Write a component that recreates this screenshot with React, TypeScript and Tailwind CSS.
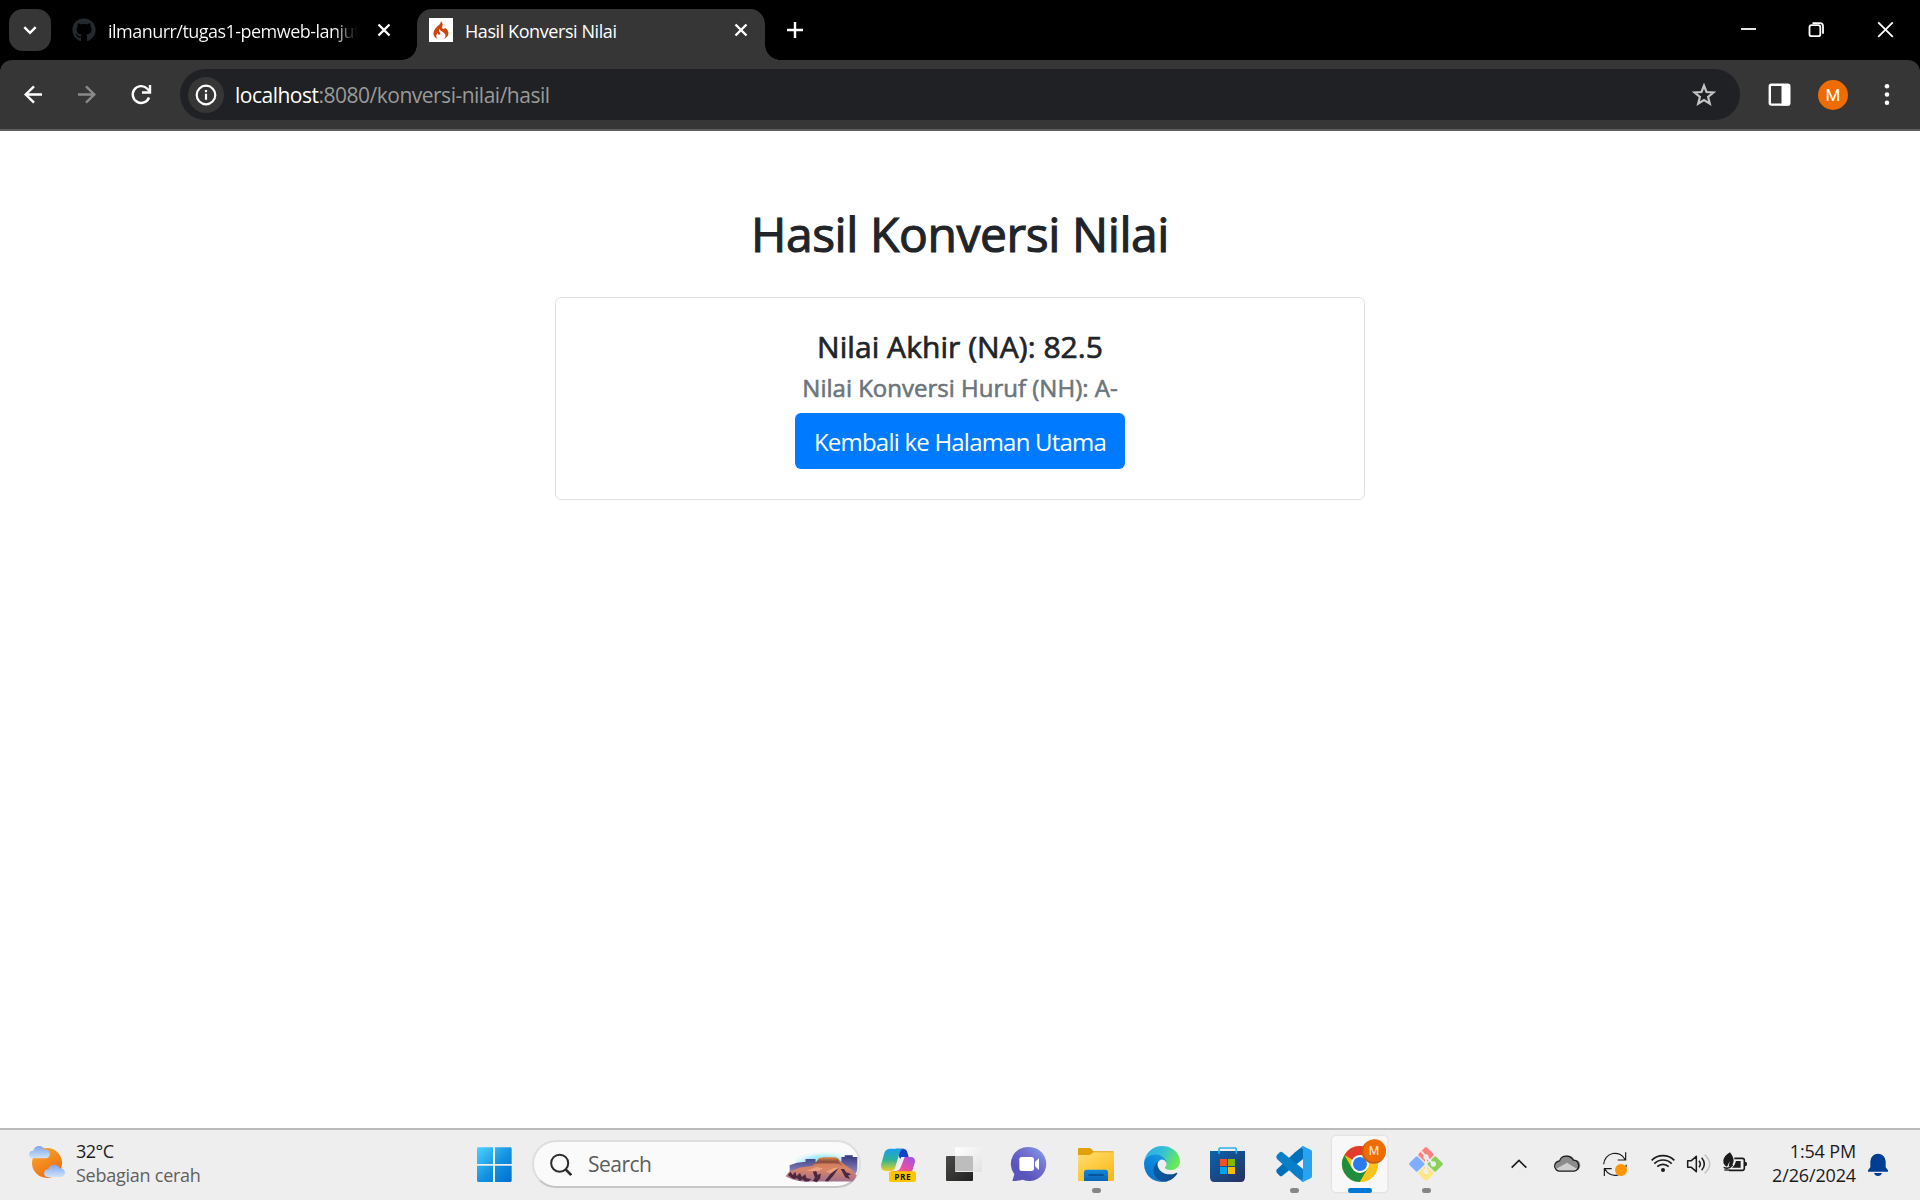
import type { ReactNode } from "react";
import { FaGithub } from "react-icons/fa";
import { SiCodeigniter } from "react-icons/si";

function TabStrip() {
  return (
    <div className="flex h-[60px] shrink-0 bg-black text-white">
      <button className="mt-[9px] ml-[9px] flex size-[42px] items-center justify-center rounded-[14px] bg-[#363636]">
        <svg viewBox="0 0 42 42" className="size-[42px]" fill="none" stroke="#fff" strokeWidth="2.4">
          <path d="M15.3 18.2 21 23.8l5.7-5.6" />
        </svg>
      </button>
      <div className="flex w-[366px] items-start pt-[18px] pl-[21px]">
        <FaGithub className="size-6 shrink-0 text-[#24292e]" />
        <div className="ml-3 h-6 w-[252px] overflow-hidden whitespace-nowrap bg-linear-to-r from-white from-90% to-black to-100% bg-clip-text text-[18px]/[27px] tracking-[-0.53px] text-transparent">
          ilmanurr/tugas1-pemweb-lanjut
        </div>
        <Cross className="ml-[12px]" />
      </div>
      <div className="relative flex h-[51px] w-[348px] self-end rounded-t-[15px] bg-[#363636] pt-[9px] pl-3">
        <div className="absolute bottom-0 -left-[15px] size-[15px] bg-[radial-gradient(circle_at_0_0,#000_14.5px,#363636_15px)]" />
        <div className="absolute -right-[15px] bottom-0 size-[15px] bg-[radial-gradient(circle_at_100%_0,#000_14.5px,#363636_15px)]" />
        <span className="flex size-6 items-center justify-center bg-white">
          <SiCodeigniter className="size-[18px] text-[#d04408]" />
        </span>
        <span className="ml-3 w-[264px] whitespace-nowrap text-[18px]/[27px] tracking-[-0.42px]">Hasil Konversi Nilai</span>
        <Cross className="" />
      </div>
      <svg viewBox="0 0 60 60" className="size-[60px]" stroke="#fff" strokeWidth="2.4">
        <path d="M22 30h16M30 22v16" />
      </svg>
      <svg viewBox="0 0 210 60" className="ml-auto h-[60px] w-[210px]" fill="none" stroke="#fff" strokeWidth="1.8">
        <path d="M31 29h15" />
        <rect x="99.500" y="25.200" width="10.800" height="11" rx="2" />
        <path d="M102.500 23.200h7.500a3 3 0 0 1 3 3v7.500" />
        <path d="m168.200 22.400 14.600 14.400M182.800 22.400 168.200 36.800" />
      </svg>
    </div>
  );
}

function Cross({ className }: { className: string }) {
  return (
    <svg viewBox="0 0 24 24" className={`size-6 shrink-0 ${className}`} stroke="#fff" strokeWidth="2.4">
      <path d="m6.500 6.500 11 11M17.500 6.500l-11 11" />
    </svg>
  );
}

function Toolbar() {
  return (
    <div className="shrink-0 bg-black">
      <div className="flex h-[71px] rounded-t-[12px] border-b-2 border-[#5e5e5e] bg-[#363636] pt-[9px]">
        <svg viewBox="0 69 180 51" className="h-[51px] w-[180px] shrink-0" fill="none" stroke="#fff" strokeWidth="2.4">
          <path d="M42 94.500H26M34 86.300l-8.300 8.200 8.300 8.200" />
          <path d="M78 94.500h16M86 86.300l8.300 8.200-8.300 8.200" stroke="#8a8a8a" />
          <path d="M149 97.500A8.400 8.400 0 1 1 147 88.500l2.500 2.500" />
          <path d="M150 85v7.500h-8" />
        </svg>
        <div className="flex h-[51px] w-[1560px] items-center rounded-full bg-[#202124] pl-[7.5px]">
          <span className="flex size-9 items-center justify-center rounded-full bg-[#363636]">
            <svg viewBox="0 0 24 24" className="size-6" fill="none" stroke="#fff" strokeWidth="2.200">
              <circle cx="12" cy="12" r="9.300" />
              <path d="M12 10.800v6M12 7v2.200" />
            </svg>
          </span>
          <span className="ml-[11.5px] text-[21px]/[30px] tracking-[-0.5px] text-[#9a9a9a]">
            <span className="text-white">localhost</span>:8080/konversi-nilai/hasil
          </span>
          <svg viewBox="0 0 24 24" className="mr-6 ml-auto size-6" fill="none" stroke="#c4c4c4" strokeWidth="2.200">
            <path d="m12 2.600 2.500 6.400 6.900.5-5.300 4.400 1.700 6.800-5.800-3.700-5.800 3.700 1.700-6.800L2.600 9.500l6.900-.5z" />
          </svg>
        </div>
        <svg viewBox="1740 69 180 51" className="h-[51px] w-[180px] shrink-0">
          <rect x="1769.800" y="84.800" width="19.500" height="19.800" rx="1.500" fill="none" stroke="#fff" strokeWidth="2.400" />
          <path d="M1781.500 84h8v21.500h-8z" fill="#fff" />
          <circle cx="1833" cy="95" r="15" fill="#ef6c00" />
          <text x="1833" y="101" textAnchor="middle" className="font-[Roboto] text-[17px]" fill="#fff">M</text>
          <g fill="#fff"><circle cx="1887" cy="86.300" r="2.300" /><circle cx="1887" cy="94.500" r="2.300" /><circle cx="1887" cy="102.700" r="2.300" /></g>
        </svg>
      </div>
    </div>
  );
}

function Page() {
  return (
    <main className="flex grow flex-col items-center bg-white pt-[74px] text-[#212529]">
      <h1 className="text-[48px]/[58px] tracking-[-0.42px] [-webkit-text-stroke:1.1px_#212529]">Hasil Konversi Nilai</h1>
      <section className="mt-[34px] flex h-[203px] w-[810px] flex-col items-center rounded-[6px] border border-[#dfdfdf] pt-[31px]">
        <h5 className="text-[30px]/[36px] tracking-[0.05px] [-webkit-text-stroke:0.7px_#212529]">Nilai Akhir (NA): 82.5</h5>
        <h6 className="mt-[8px] text-[24px]/[29px] text-[#6c757d] [-webkit-text-stroke:0.6px_#6c757d]">Nilai Konversi Huruf (NH): A-</h6>
        <a className="mt-[11px] flex h-[56px] w-[330px] items-center justify-center rounded-[6px] bg-[#007bff] pt-[2px] text-[24px]/[36px] tracking-[-0.78px] text-white">Kembali ke Halaman Utama</a>
      </section>
    </main>
  );
}

/* One 66px wide taskbar slot; x is the slot's left edge on the icon sheet. */
function Slot({ x, children }: { x: number; children: ReactNode }) {
  return (
    <svg viewBox={`${x} 30 198 210`} className="h-[70px] w-[66px] shrink-0">
      {children}
    </svg>
  );
}

function Taskbar() {
  return (
    <footer className="flex h-[72px] shrink-0 border-t-2 border-[#bbb] bg-[#eee]">
      <div className="flex w-[462px] pl-[29px]">
        <svg viewBox="87 30 108 210" className="h-[70px] w-9">
          <defs>
            <linearGradient id="sun" x1="0" y1="0" x2=".6" y2="1"><stop stopColor="#f5b02e" /><stop offset="1" stopColor="#f26a10" /></linearGradient>
            <linearGradient id="cl" x1="0" y1="0" x2="0" y2="1"><stop stopColor="#7fa6e8" /><stop offset="1" stopColor="#cfe2fb" /></linearGradient>
          </defs>
          <circle cx="141" cy="129" r="45" fill="url(#sun)" />
          <path d="M98 115a11 11 0 0 1 2-23 18 18 0 0 1 34-3 13 13 0 0 1 5 26z" fill="url(#cl)" />
          <path d="M143 171a11 11 0 0 1 2-23 18 18 0 0 1 34-3 13 13 0 0 1 5 26z" fill="url(#cl)" />
        </svg>
        <div className="ml-[11px] flex flex-col pt-[9px] text-[18px]/[24px]">
          <span className="tracking-[-0.5px] text-[#1b1b1b]">32°C</span>
          <span className="tracking-[-0.25px] text-[#606060]">Sebagian cerah</span>
        </div>
      </div>
      <svg viewBox="6 30 198 210" className="h-[70px] w-[66px]">
        <defs><linearGradient id="win" gradientUnits="userSpaceOnUse" x1="51" y1="82" x2="155" y2="186"><stop stopColor="#4cd3ff" /><stop offset=".55" stopColor="#1290e0" /><stop offset="1" stopColor="#0070d0" /></linearGradient></defs>
        <path d="M54 82h45v50H51V85zM105 82h48l2 3v47h-50zM51 137h48v49H54l-3-3zM105 137h50v46l-2 3h-48z" fill="url(#win)" />
      </svg>
      <div className="mt-[10px] mr-[5px] ml-[4px] flex h-[48px] w-[329px] items-center rounded-full border-2 border-[#dedede] border-b-[#c6c6c6] bg-[#fafafa]">
        <svg viewBox="270 97 66 70" className="ml-4 h-[23px] w-[22px]" fill="none" stroke="#2b2b2b">
          <circle cx="299" cy="128" r="26" strokeWidth="6" />
          <path d="m317 147 17 17" strokeWidth="8" />
        </svg>
        <span className="ml-[16px] text-[21px]/[28px] tracking-[-0.5px] text-[#5c5c5c]">Search</span>
        <svg viewBox="976 80 220 114" className="mr-[1px] ml-auto h-[38px] w-[73px]">
          <defs>
            <radialGradient id="sky" cx=".5" cy=".75" r=".6"><stop stopColor="#6fdcfb" /><stop offset=".6" stopColor="#a8ebfc" /><stop offset="1" stopColor="#fafafa" stopOpacity="0" /></radialGradient>
            <linearGradient id="butte" x1="0" y1="0" x2="0" y2="1"><stop stopColor="#33387c" /><stop offset="1" stopColor="#9a90c4" /></linearGradient>
            <linearGradient id="rock" x1="0" y1="0" x2="0" y2="1"><stop stopColor="#c97a52" /><stop offset=".5" stopColor="#d98468" /><stop offset="1" stopColor="#a0708e" /></linearGradient>
            <linearGradient id="cap" x1="0" y1="0" x2="0" y2="1"><stop stopColor="#e08a48" /><stop offset=".5" stopColor="#8d4c3d" /><stop offset="1" stopColor="#b86a50" /></linearGradient>
          </defs>
          <ellipse cx="1092" cy="122" rx="88" ry="38" fill="url(#sky)" />
          <path d="M990 165v-24l22-8 26-3v-8h30v8l40 4 38-4v-14h10v-5h24v5h14v34q0 14-10 20z" fill="url(#butte)" />
          <path d="m978 174 10-14 32-12 40-6 20-22 14-2h38l20 18 26 18 14 18q-4 12-12 18h-150q-34-4-52-16z" fill="url(#rock)" />
          <path d="m1056 140 14-8 8-12 14-3h36l10 5v8l14 12q-20-8-40-6-30-2-56 4z" fill="url(#cap)" />
          <path d="m985 170 8-10 6 10 8-10 4 14 10-10 6 12 10-8 4 12 14 2-8 8h-12l-6-8-8 6-8-8-12 2zM1060 160l10-2 4 12 10-4-2 14-10 12-12-4 6-10zM1096 188l16-20 26-20-16 24-16 18zM1144 152l10 0 6 10 16 6-10 4 6 10-14-4z" fill="#4c2840" />
          <path d="m1040 158 30-12 20 4-12 8zM1100 160l24-12 14 0-26 16z" fill="#eba283" />
        </svg>
      </div>
      <AppIcons />
      <Tray />
    </footer>
  );
}

function AppIcons() {
  return (
    <>
      <Slot x={18}>
        <defs>
          <linearGradient id="cpa" x1="0" y1="0" x2="0" y2="1"><stop stopColor="#1a9df0" /><stop offset=".5" stopColor="#2bb39a" /><stop offset="1" stopColor="#f0cf20" /></linearGradient>
          <linearGradient id="cpb" x1="0" y1="1" x2="1" y2="0"><stop stopColor="#ff8a50" /><stop offset=".4" stopColor="#f0509a" /><stop offset="1" stopColor="#9a50f0" /></linearGradient>
        </defs>
        <path d="M108 86h22q8 0 11 8l5 17h-14q-8 0-11 8z" fill="#1540c8" />
        <path d="M89 86h41q-8 2-11 12l-14 46q-3 9-12 9H76q-14-2-13-18l10-36q4-12 16-13z" fill="url(#cpa)" />
        <path d="M135 111h18q12 0 12 14l-7 24q-3 8-12 9H84q10 0 14-5 6 0 10-10l12-24q4-8 15-8z" fill="url(#cpb)" />
        <path d="M124 111h10l-13 34q-4 8-12 8h-12q8-2 11-12z" fill="#f4eef2" />
        <rect x="87" y="154" width="81" height="32" rx="7" fill="#fdc500" />
        <text x="128" y="179" textAnchor="middle" className="font-['Open_Sans'] text-[25px] font-bold" letterSpacing="1.500" fill="#151515">PRE</text>
      </Slot>
      <Slot x={216}>
        <defs><linearGradient id="tv" x1="0" y1="0" x2="1" y2="1"><stop stopColor="#4a4a48" /><stop offset="1" stopColor="#222" /></linearGradient>
        <linearGradient id="tw" x1="0" y1="0" x2="1" y2="1"><stop stopColor="#fff" /><stop offset="1" stopColor="#e2e2e2" /></linearGradient></defs>
        <rect x="258" y="108" width="81" height="75" rx="3" fill="url(#tv)" />
        <rect x="285" y="82" width="81" height="74" rx="3" fill="url(#tw)" />
        <path d="M285 108h51l3 3v42h-54z" fill="#bdbdbd" />
      </Slot>
      <Slot x={414}>
        <defs><linearGradient id="chat" x1="0" y1="1" x2="1" y2="0"><stop offset=".3" stopColor="#5a55bd" /><stop offset=".65" stopColor="#7471d0" /><stop offset="1" stopColor="#7ea8f8" /></linearGradient></defs>
        <path d="M507 81a51 51 0 1 1-19 98q-14 4-31 4l6-20a51 51 0 0 1 44-82z" fill="url(#chat)" />
        <rect x="478" y="111" width="44" height="42" rx="7" fill="#fff" />
        <path d="m525 126 12-11v35l-12-11z" fill="#fff" />
      </Slot>
      <Slot x={612}>
        <defs><linearGradient id="fold" x1="0" y1="0" x2=".7" y2="1"><stop stopColor="#ffdf74" /><stop offset="1" stopColor="#fbb915" /></linearGradient>
        <linearGradient id="fb" x1="0" y1="0" x2="0" y2="1"><stop stopColor="#1288dc" /><stop offset="1" stopColor="#0b63b4" /></linearGradient></defs>
        <path d="M657 84h31q4 0 7 4l6 6h57q4 0 4 4v30H654V87q0-3 3-3z" fill="#e3a008" />
        <path d="M654 105h32q5 0 9-4l5-4h62v82q0 4-4 4H654z" fill="url(#fold)" />
        <path d="M672 183v-26q0-8 8-8h56q8 0 8 8v26z" fill="url(#fb)" />
        <path d="M687 165h42" stroke="#084a88" strokeWidth="5" strokeLinecap="round" />
        <rect x="696" y="204" width="27" height="15" rx="7" fill="#868686" />
      </Slot>
      <Slot x={0}>
        <defs>
          <linearGradient id="e1" x1="0" y1="0" x2="1" y2="0"><stop stopColor="#0c59a4" /><stop offset="1" stopColor="#114a8b" /></linearGradient>
          <linearGradient id="e2" x1=".8" y1="0" x2=".3" y2="1"><stop stopColor="#1b9de2" /><stop offset=".5" stopColor="#0a84da" /><stop offset="1" stopColor="#0a70c8" /></linearGradient>
          <linearGradient id="e3" x1="0" y1=".1" x2="1" y2=".5"><stop stopColor="#2aa8e8" /><stop offset=".5" stopColor="#35c1d6" /><stop offset="1" stopColor="#6bea55" /></linearGradient>
        </defs>
        <g transform="translate(42 78) scale(.4219) translate(-4.63 -4.92)">
          <path fill="url(#e1)" d="M235.680 195.480a93.730 93.730 0 0 1-10.540 4.710 101.870 101.870 0 0 1-35.900 6.460c-47.320 0-88.540-32.550-88.540-74.320a31.480 31.480 0 0 1 16.430-26.830c-42.800 1.800-53.800 46.400-53.800 72.530 0 73.880 68.090 81.370 82.760 81.370 7.910 0 19.840-2.300 27-4.560l1.310-.44a128.340 128.340 0 0 0 66.600-52.800 4 4 0 0 0-5.320-5.620z" />
          <path fill="url(#e2)" d="M110.340 246.340A79.200 79.200 0 0 1 87.600 225a80.720 80.720 0 0 1 29.530-119.500c3.120-1.470 8.450-4.130 15.540-4a32.350 32.350 0 0 1 25.690 13 31.880 31.880 0 0 1 6.360 18.660c0-.21 24.460-79.600-80-79.600-43.900 0-80 41.660-80 78.210a130.150 130.150 0 0 0 12.110 56 128 128 0 0 0 156.380 67.110 75.550 75.550 0 0 1-62.780-8z" />
          <path fill="url(#e3)" d="M156.940 153.830c-.81 1.050-3.300 2.500-3.300 5.660 0 2.610 1.700 5.120 4.720 7.230 14.380 10 41.490 8.680 41.560 8.680a59.560 59.560 0 0 0 30.270-8.350 61.380 61.380 0 0 0 30.410-52.930c.26-22.410-8-37.310-11.340-43.910C228.100 28.790 182.420 4.920 132.720 4.920a128 128 0 0 0-128 126.180c.48-36.540 36.800-66.050 80-66.050 3.500 0 23.460.34 42 10.070 16.340 8.580 24.900 18.940 30.850 29.210 6.180 10.670 7.280 24.150 7.280 29.520s-2.740 13.330-7.910 19.980z" />
        </g>
      </Slot>
      <Slot x={198}>
        <defs><linearGradient id="st" x1="0" y1="0" x2="1" y2="1"><stop stopColor="#0a63b0" /><stop offset="1" stopColor="#27305c" /></linearGradient></defs>
        <path d="M240 93h105v79q0 14-13 14h-79q-13 0-13-14z" fill="url(#st)" />
        <path d="M267 101V88q0-4 4-4h44q4 0 4 4v13" fill="none" stroke="#2cb1ee" strokeWidth="5" />
        <path d="M270 117h21v21h-21z" fill="#f25022" /><path d="M294 117h21v21h-21z" fill="#7fba00" />
        <path d="M270 141h21v21h-21z" fill="#00a4ef" /><path d="M294 141h21v21h-21z" fill="#ffb900" />
      </Slot>
      <Slot x={396}>
        <path d="m441 148 54-51 24-19v39l-62 50q-4 3-8 0l-8-8q-5-6 0-11z" fill="#0070b8" />
        <path d="m441 117 54 50 24 19v-39l-62-50q-4-3-8 0l-8 8q-5 6 0 12z" fill="#0a7fc9" />
        <path d="m519 78 23 11q4 2 4 6v74q0 4-4 6l-23 11-5-3 5-9v-84l-5-9z" fill="#27a3f0" />
        <rect x="480" y="204" width="27" height="15" rx="7" fill="#868686" />
      </Slot>
      <Slot x={594}>
        <rect x="604" y="46" width="170" height="172" rx="14" fill="#f8f8f8" stroke="#e3e3e3" strokeWidth="4" />
        <circle cx="690" cy="132" r="54" fill="#fbc116" />
        <path d="M690 132 643.200 105a54 54 0 0 1 93.600 0z" fill="#e33b2e" />
        <path d="M643.200 105a54 54 0 0 0 46.800 81l23.400-40.500L690 159l-23.400-13.500z" fill="#1e8e3e" />
        <path d="M690 186a54 54 0 0 0 46.800-81H690l23.400 40.500z" fill="#fcc419" />
        <circle cx="690" cy="132" r="27" fill="#fff" />
        <circle cx="690" cy="132" r="21" fill="#2a7bf0" />
        <circle cx="731" cy="95" r="36" fill="#c95a0c" />
        <circle cx="734" cy="92" r="34" fill="#ef6c00" />
        <text x="732" y="106" textAnchor="middle" className="font-[Roboto] text-[36px] font-medium" fill="#fbd9bd">M</text>
        <rect x="654" y="204" width="72" height="15" rx="7" fill="#0078d4" />
      </Slot>
      <Slot x={792}>
        <g transform="translate(888 132) rotate(45)">
          <rect x="-37" y="-37" width="35" height="35" rx="4" fill="#ff7f7f" />
          <rect x="2" y="-37" width="35" height="35" rx="4" fill="#8cd05c" />
          <rect x="-37" y="2" width="35" height="35" rx="4" fill="#7fadff" />
          <rect x="2" y="2" width="35" height="35" rx="4" fill="#ffe680" />
        </g>
        <g stroke="#eee" strokeWidth="6" fill="#eee">
          <path d="m874 94 14 16v44M888 110l22 22" fill="none" />
          <circle cx="888" cy="111" r="5" /><circle cx="888" cy="155" r="5" /><circle cx="910" cy="132" r="5" />
        </g>
        <rect x="876" y="204" width="27" height="15" rx="7" fill="#868686" />
      </Slot>
    </>
  );
}

function Tray() {
  return (
    <div className="ml-auto flex">
      <svg viewBox="60 30 720 210" className="h-[70px] w-[240px]" fill="none" stroke="#1b1b1b" strokeWidth="5">
        <path d="m65 143 22-22 22 22" />
        <path d="M212 153a15 15 0 0 1-1-31 23 23 0 0 1 42-3 17 17 0 0 1 2 34z" fill="#8c8c8c" stroke="none" />
        <path d="m199 146 32-18 32 20q-4 6-10 6h-41q-8 0-13-8z" fill="#cfcfcf" stroke="none" />
        <path d="M210 153.500a15 15 0 0 1-1-31q4-14 20-14 14 0 21 12 15 0 16 17 0 14-14 16z" strokeWidth="4" />
        <g strokeWidth="3.500"><path d="M341 133a34 34 0 0 1 65-13M407 97v23h-24M409 134a34 34 0 0 1-64 14M343 168v-22h22" /></g>
        <circle cx="393" cy="150" r="18" fill="#ff9500" stroke="none" />
        <path d="M485 121a48 48 0 0 1 68 0M493 131a36 36 0 0 1 52 0M502 140a24 24 0 0 1 34 0" />
        <circle cx="519" cy="150" r="6" fill="#1b1b1b" stroke="none" />
        <path d="M593 122h11l15-13v46l-15-13h-11z" strokeLinejoin="round" strokeWidth="4.500" />
        <path d="M627 122q8 10 0 20M635 113q16 19 0 38" strokeWidth="4.500" />
        <path d="M644 104q30 28 0 56" stroke="#c4c4c4" strokeWidth="4.500" />
        <path d="M733 115h24q6 0 6 6v24q0 6-6 6h-40" />
        <path d="M764 126h4q3 0 3 6t-3 6h-4z" fill="#1b1b1b" stroke="none" />
        <path d="M738 123h14v20h-26q9-6 12-20z" fill="#1b1b1b" stroke="none" />
        <path d="M700 121q3-15 20-24 11 14 11 26-2 16-15 17l3-16-8 16q-12-4-11-19z" fill="#1b1b1b" stroke="none" />
        <path d="M701 142q16 8 27-8" strokeWidth="4" /><path d="M703 150h16" strokeWidth="4" />
      </svg>
      <div className="flex w-[106px] flex-col items-end pt-[9px] text-[18px]/[24px] text-[#1b1b1b]">
        <span className="tracking-[-0.15px]">1:54 PM</span>
        <span className="tracking-[-0.15px]">2/26/2024</span>
      </div>
      <svg viewBox="1131 30 66 210" className="mr-[31px] ml-[11px] h-[70px] w-[22px]" fill="#003e92">
        <path d="M1134 155v-4l7-9v-18a23 23 0 0 1 46 0v18l7 9v4zM1152 159h24q-3 9-12 9t-12-9z" />
      </svg>
    </div>
  );
}

export default function App() {
  return (
    <div className="flex h-[1200px] w-[1920px] flex-col overflow-hidden bg-white font-['Open_Sans','Noto_Sans',sans-serif]">
      <TabStrip />
      <Toolbar />
      <Page />
      <Taskbar />
    </div>
  );
}
